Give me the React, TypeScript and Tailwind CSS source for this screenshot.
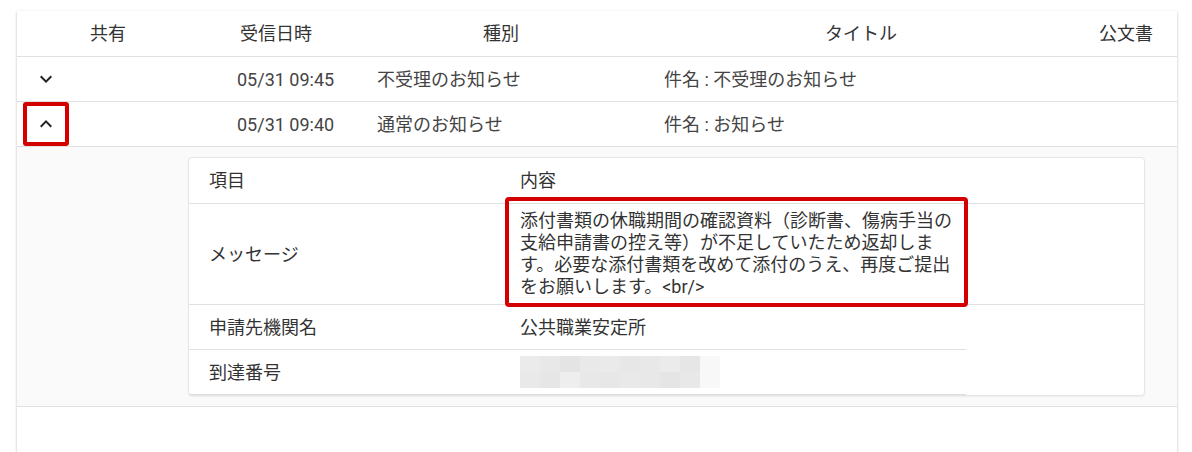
import React from 'react';

const font = { fontFamily: 'Roboto, "Noto Sans CJK JP", sans-serif' };

function ChevronIcon({ up }: { up?: boolean }) {
  return (
    <svg viewBox="0 0 24 24" className="w-6 h-6 fill-[#222]">
      {up ? (
        <path d="M7.41 15.41 12 10.83l4.59 4.58L18 14l-6-6-6 6z" />
      ) : (
        <path d="M7.41 8.59 12 13.17l4.59-4.58L18 10l-6 6-6-6 1.41-1.41z" />
      )}
    </svg>
  );
}

const blur = [
  'bg-[#ebebeb]', 'bg-[#e8e8e8]', 'bg-[#e4e4e4]', 'bg-[#e9e9e9]', 'bg-[#eaeaea]',
  'bg-[#e7e7e7]', 'bg-[#e8e8e8]', 'bg-[#ebebeb]', 'bg-[#e6e6e6]', 'bg-[#f8f8f8]',
  'bg-[#e9e9e9]', 'bg-[#e6e6e6]', 'bg-[#eeeeee]', 'bg-[#e8e8e8]', 'bg-[#e7e7e7]',
  'bg-[#e9e9e9]', 'bg-[#e8e8e8]', 'bg-[#e5e5e5]', 'bg-[#e8e8e8]', 'bg-[#f8f8f8]',
];

function Row({ up, date, kind, title }: { up?: boolean; date: string; kind: string; title: string }) {
  return (
    <div className="relative flex items-center h-[45px] border-b border-[#e0e0e0] text-[18px] text-[#444]">
      <div className="w-[58px] flex justify-center">
        <ChevronIcon up={up} />
      </div>
      <div className="w-[162px]" />
      <div className="w-[140px]">{date}</div>
      <div className="w-[287px]">{kind}</div>
      <div>{title}</div>
      {up && (
        <div className="absolute left-[6px] top-0 w-[46px] h-[44px] border-4 border-[#d40000] rounded-[3px]" />
      )}
    </div>
  );
}

export default function App() {
  return (
    <div style={font} className="min-h-[452px] bg-white pt-[11px] pl-[17px] pr-[15px] overflow-hidden">
      <div className="bg-white h-[460px] shadow-[0_1px_3px_rgba(0,0,0,0.2),0_1px_1px_rgba(0,0,0,0.12)]">
        {/* header */}
        <div className="flex items-center h-[46px] pl-[73px] border-b border-[#e0e0e0] text-[18px] text-[#333]">
          <div className="w-[150px]">共有</div>
          <div className="w-[243px]">受信日時</div>
          <div className="w-[342px]">種別</div>
          <div className="w-[274px]">タイトル</div>
          <div>公文書</div>
        </div>

        <Row date="05/31 09:45" kind="不受理のお知らせ" title="件名 : 不受理のお知らせ" />
        <Row up date="05/31 09:40" kind="通常のお知らせ" title="件名 : お知らせ" />

        {/* expanded detail */}
        <div className="bg-[#fafafa] border-b border-[#e0e0e0] pt-[10px] pb-[10px] pl-[171px] pr-[32px]">
          <div className="bg-white border border-[#e6e6e6] rounded-[4px] shadow-[0_1px_2px_rgba(0,0,0,0.06)] text-[18px] text-[#333]">
            <div className="grid grid-cols-[331px_1fr] items-center h-[46px] border-b border-[#e0e0e0]">
              <div className="pl-5">項目</div>
              <div>内容</div>
            </div>
            <div className="relative grid grid-cols-[331px_1fr] items-center h-[101px] border-b border-[#e0e0e0]">
              <div className="pl-5">メッセージ</div>
              <div className="w-[440px] leading-[22px] text-[#333]">
                添付書類の休職期間の確認資料（診断書、傷病手当の支給申請書の控え等）が不足していたため返却します。必要な添付書類を改めて添付のうえ、再度ご提出をお願いします。&lt;br/&gt;
              </div>
              <div className="absolute left-[316px] top-[-7px] w-[463px] h-[110px] border-4 border-[#d40000] rounded-[4px]" />
            </div>
            <div className="w-[777px] grid grid-cols-[331px_1fr] items-center h-[45px] border-b border-[#e0e0e0]">
              <div className="pl-5">申請先機関名</div>
              <div>公共職業安定所</div>
            </div>
            <div className="w-[777px] grid grid-cols-[331px_1fr] items-center h-[45px] border-b border-[#dcdcdc]">
              <div className="pl-5">到達番号</div>
              <div className="grid grid-cols-[repeat(10,20px)] grid-rows-[16px_16px]">
                {blur.map((c, i) => (
                  <div key={i} className={c} />
                ))}
              </div>
            </div>
          </div>
        </div>
      </div>
    </div>
  );
}
